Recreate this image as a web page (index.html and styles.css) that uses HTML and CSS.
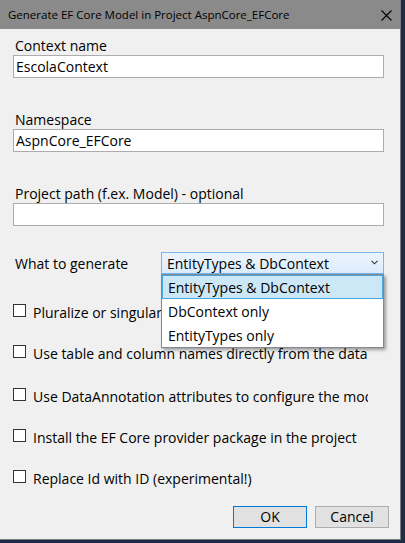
FILE: index.html
```html
<!DOCTYPE html>
<html lang="en">
<head>
<meta charset="utf-8">
<title>Generate EF Core Model</title>
<link rel="stylesheet" href="styles.css">
</head>
<body>
<div class="window">
  <div class="titlebar">
    <span class="title">Generate EF Core Model in Project AspnCore_EFCore</span>
    <svg class="close" width="11" height="11" viewBox="0 0 11 11"><path d="M0.5 0.5 L10.5 10.5 M10.5 0.5 L0.5 10.5" stroke="#000" stroke-width="1.1" fill="none"/></svg>
  </div>
  <div class="content">
    <div class="label first">Context name</div>
    <div class="input">EscolaContext</div>

    <div class="label">Namespace</div>
    <div class="input">AspnCore_EFCore</div>

    <div class="label">Project path (f.ex. Model) - optional</div>
    <div class="input"></div>

    <div class="gen-row">
      <span class="gen-label">What to generate</span>
      <div class="select">
        <span class="select-text">EntityTypes &amp; DbContext</span>
        <svg class="chevron" width="7" height="5" viewBox="0 0 7 5"><path d="M0.5 0.8 L3.5 3.8 L6.5 0.8" stroke="#333" stroke-width="1.1" fill="none"/></svg>
        <div class="dropdown">
          <div class="option selected">EntityTypes &amp; DbContext</div>
          <div class="option">DbContext only</div>
          <div class="option">EntityTypes only</div>
        </div>
      </div>
    </div>

    <div class="checks">
      <div class="check"><span class="box"></span><span class="check-text">Pluralize or singularize generated object names</span></div>
      <div class="check"><span class="box"></span><span class="check-text">Use table and column names directly from the database</span></div>
      <div class="check gap2"><span class="box"></span><span class="check-text">Use DataAnnotation attributes to configure the model</span></div>
      <div class="check"><span class="box"></span><span class="check-text">Install the EF Core provider package in the project</span></div>
      <div class="check"><span class="box"></span><span class="check-text">Replace Id with ID (experimental!)</span></div>
    </div>

    <div class="buttons">
      <div class="btn default">OK</div>
      <div class="btn">Cancel</div>
    </div>
  </div>
</div>
</body>
</html>
```
FILE: styles.css
```css
html, body {
  margin: 0;
  padding: 0;
}
body {
  background: #1e2d45;
  width: 405px;
  height: 543px;
  overflow: hidden;
  font-family: "Open Sans", "Noto Sans", sans-serif;
  color: #000;
}
.window {
  width: 400px;
  height: 539px;
  background: #f0f0f0;
  border-right: 1px solid #7d7d7d;
  border-bottom: 1px solid #7d7d7d;
  display: flex;
  flex-direction: column;
}
.titlebar {
  height: 29px;
  flex: none;
  background: #8a8a8a;
  display: flex;
  align-items: center;
  justify-content: space-between;
  padding: 0 8px 0 8px;
}
.title {
  font-size: 11.5px;
  line-height: 16px;
}
.close {
  display: block;
  margin-top: 1px;
}
.content {
  display: flex;
  flex-direction: column;
  padding: 0 11px 0 13px;
  font-size: 14px;
  line-height: 19px;
}
.label {
  margin-top: 32px;
  padding-left: 2px;
  height: 19px;
}
.label.first {
  margin-top: 7px;
}
.input {
  width: 371px;
  height: 23px;
  box-sizing: border-box;
  background: #fff;
  border: 1px solid #acacac;
  padding: 1px 2px;
}
.gen-row {
  margin-top: 26px;
  display: flex;
  align-items: center;
  height: 22px;
}
.gen-label {
  width: 148px;
  flex: none;
  padding-left: 2px;
  box-sizing: border-box;
}
.select {
  position: relative;
  width: 223px;
  height: 22px;
  box-sizing: border-box;
  border: 1px solid #7eb4ea;
  background: linear-gradient(#ecf4fc, #dcecfc);
  display: flex;
  align-items: center;
  justify-content: space-between;
  padding: 0 5px 0 5px;
}
.chevron {
  display: block;
  margin-top: -1px;
}
.dropdown {
  position: absolute;
  left: -1px;
  top: 21px;
  width: 223px;
  box-sizing: border-box;
  background: #fff;
  border: 1px solid #828790;
  box-shadow: 2px 2px 3px rgba(0, 0, 0, 0.35);
  z-index: 2;
}
.option {
  height: 24px;
  box-sizing: border-box;
  padding: 2px 5px 0 5px;
  border: 1px solid transparent;
}
.option.selected {
  background: #cce8f6;
  border-color: #4aa6dc;
}
.checks {
  margin-top: 29px;
  display: flex;
  flex-direction: column;
  gap: 22px;
}
.check {
  display: flex;
  align-items: flex-start;
  height: 19px;
}
.check.gap2 {
  margin-top: 2px;
}
.box {
  width: 13px;
  height: 13px;
  box-sizing: border-box;
  border: 1px solid #333;
  background: #fff;
  margin-top: 1px;
  flex: none;
}
.check-text {
  margin-left: 7px;
  width: 335px;
  white-space: nowrap;
  overflow: hidden;
}
.buttons {
  margin-top: 18px;
  display: flex;
  justify-content: flex-end;
  gap: 8px;
}
.btn {
  width: 74px;
  height: 22px;
  box-sizing: border-box;
  border: 1px solid #adadad;
  background: #e1e1e1;
  text-align: center;
  line-height: 20px;
}
.btn.default {
  border-color: #0078d7;
}
```
